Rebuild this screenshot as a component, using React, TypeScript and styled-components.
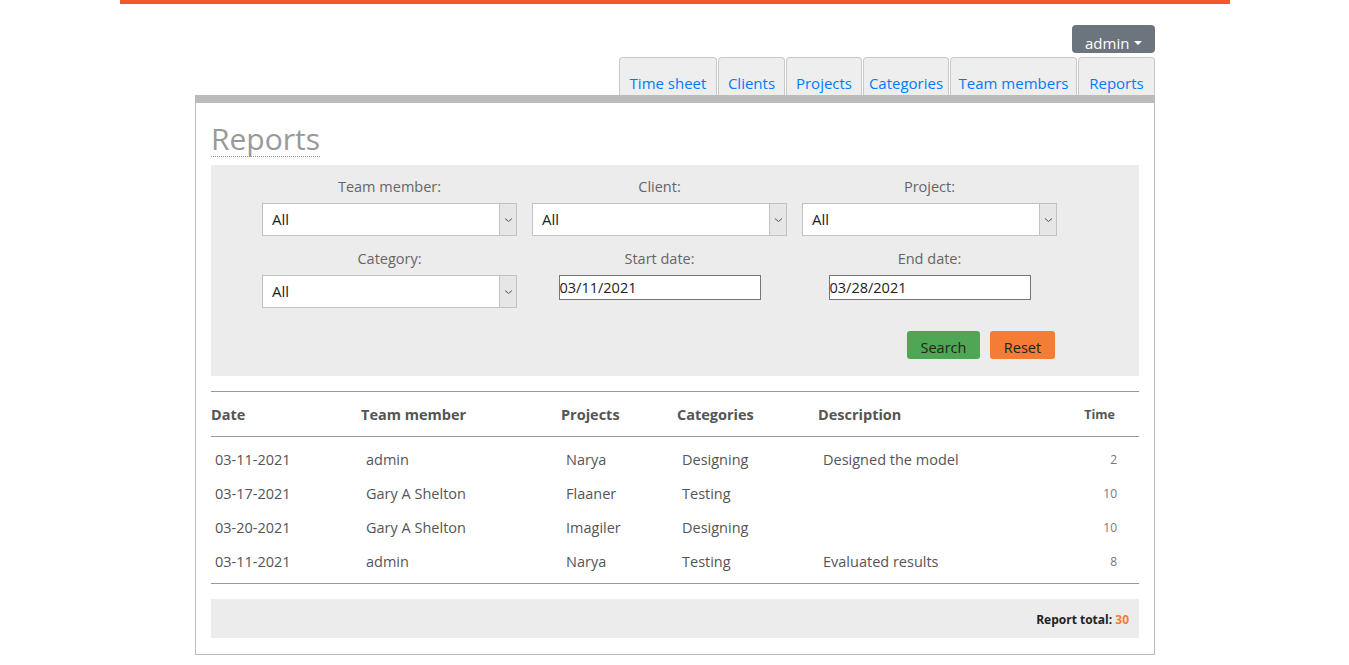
import React from 'react';
import styled, { createGlobalStyle } from 'styled-components';

const GlobalStyle = createGlobalStyle`
  body {
    margin: 0;
    background: #fff;
    font-family: "Open Sans", "Noto Sans", Arial, sans-serif;
    color: #555;
  }
`;

const TopBar = styled.div`
  width: 1110px;
  height: 4px;
  margin: 0 auto 0 120px;
  background: #f05a28;
`;

const Wrapper = styled.div`
  width: 960px;
  margin: 0 0 0 195px;
`;

const UserRow = styled.div`
  display: flex;
  justify-content: flex-end;
  padding-top: 21px;
`;

const UserButton = styled.button`
  display: flex;
  align-items: flex-end;
  gap: 5px;
  width: 83px;
  height: 28px;
  padding: 0 0 0 13px;
  border: none;
  border-radius: 4px;
  background: #6c757d;
  color: #fff;
  font-family: inherit;
  font-size: 15px;
  cursor: pointer;
`;

const Caret = styled.span`
  width: 0;
  height: 0;
  margin-bottom: 8px;
  border-left: 4px solid transparent;
  border-right: 4px solid transparent;
  border-top: 4px solid #fff;
`;

const Tabs = styled.nav`
  display: flex;
  justify-content: flex-end;
  margin-top: 4px;
`;

const Tab = styled.a<{ $w: number }>`
  display: block;
  box-sizing: border-box;
  width: ${(p) => p.$w}px;
  height: 38px;
  padding-top: 14px;
  margin-left: 1px;
  border: 1px solid #c8c8c8;
  border-bottom: none;
  border-radius: 4px 4px 0 0;
  background: #eee;
  color: #007bff;
  font-size: 15px;
  line-height: 22px;
  text-align: center;
  text-decoration: none;
  white-space: nowrap;
`;

const Panel = styled.main`
  box-sizing: border-box;
  border: 1px solid #bbb;
  border-top: 8px solid #bbb;
  padding: 19px 15px 16px;
`;

const Title = styled.h1`
  display: inline-block;
  margin: 0;
  font-size: 30px;
  font-weight: 400;
  line-height: 34px;
  color: #999;
  border-bottom: 1px dotted #888;
`;

const Filters = styled.section`
  margin-top: 8px;
  padding: 12px 82px 17px 51px;
  background: #ececec;
`;

const FilterGrid = styled.div`
  display: grid;
  grid-template-columns: repeat(3, 255px);
  column-gap: 15px;
  row-gap: 13px;
`;

const Field = styled.label`
  display: flex;
  flex-direction: column;
  align-items: center;
  gap: 7px;
  font-size: 14.5px;
  color: #666;
`;

const SelectBox = styled.div`
  display: flex;
  box-sizing: border-box;
  width: 255px;
  height: 33px;
  border: 1px solid #c2c2c2;
  background: #fff;
`;

const SelectValue = styled.span`
  flex: 1;
  padding-left: 9px;
  font-size: 15px;
  line-height: 31px;
  color: #222;
`;

const SelectArrow = styled.span`
  display: flex;
  align-items: center;
  justify-content: center;
  width: 16px;
  border-left: 1px solid #c2c2c2;
  background: #e6e6e6;
`;

const DateInput = styled.div`
  box-sizing: border-box;
  width: 202px;
  height: 25px;
  border: 1px solid #767676;
  background: #fff;
  font-size: 14.5px;
  line-height: 23px;
  color: #222;
`;

const Actions = styled.div`
  display: flex;
  justify-content: flex-end;
  gap: 10px;
  margin-top: 23px;
  padding-right: 2px;
`;

const Btn = styled.button<{ $bg: string; $w: number }>`
  width: ${(p) => p.$w}px;
  height: 28px;
  padding: 4px 0 0;
  border: none;
  border-radius: 3px;
  background: ${(p) => p.$bg};
  color: #222;
  font-family: inherit;
  font-size: 14.5px;
  cursor: pointer;
`;

const Table = styled.table`
  width: 100%;
  margin-top: 15px;
  border-collapse: collapse;
  border-top: 1px solid #999;
  border-bottom: 1px solid #999;
`;

const Th = styled.th<{ $w?: number; $small?: boolean }>`
  width: ${(p) => (p.$w ? `${p.$w}px` : 'auto')};
  height: 44px;
  padding: 0;
  text-align: ${(p) => (p.$small ? 'right' : 'left')};
  padding-right: ${(p) => (p.$small ? '24px' : '0')};
  font-size: ${(p) => (p.$small ? '12.5px' : '14.5px')};
  font-weight: 700;
  color: #555;
  border-bottom: 1px solid #999;
`;

const Td = styled.td<{ $small?: boolean; $first?: boolean }>`
  height: 34px;
  padding: 0 0 0 ${(p) => (p.$small ? '0' : p.$first ? '4px' : '5px')};
  text-align: ${(p) => (p.$small ? 'right' : 'left')};
  padding-right: ${(p) => (p.$small ? '22px' : '0')};
  font-size: ${(p) => (p.$small ? '12px' : '14.5px')};
  color: ${(p) => (p.$small ? '#777' : '#555')};
  vertical-align: middle;
`;

const Row = styled.tr`
  &:first-child td {
    padding-top: 5px;
  }
  &:last-child td {
    padding-bottom: 5px;
  }
`;

const TotalBar = styled.div`
  margin-top: 15px;
  padding: 12px 10px 0 0;
  height: 27px;
  box-sizing: content-box;
  background: #ececec;
  text-align: right;
  font-size: 12px;
  font-weight: 700;
  color: #222;
`;

const TotalValue = styled.span`
  color: #f57c35;
`;

const ChevronDown = () => (
  <svg width="9" height="6" viewBox="0 0 9 6">
    <path d="M1 1.5l3.5 3 3.5-3" fill="none" stroke="#555" strokeWidth="1" />
  </svg>
);

const Select = ({ value }: { value: string }) => (
  <SelectBox>
    <SelectValue>{value}</SelectValue>
    <SelectArrow>
      <ChevronDown />
    </SelectArrow>
  </SelectBox>
);

const tabs = [
  { label: 'Time sheet', w: 98 },
  { label: 'Clients', w: 67 },
  { label: 'Projects', w: 76 },
  { label: 'Categories', w: 86 },
  { label: 'Team members', w: 127 },
  { label: 'Reports', w: 77 },
];

const rows = [
  { date: '03-11-2021', member: 'admin', project: 'Narya', category: 'Designing', desc: 'Designed the model', time: 2 },
  { date: '03-17-2021', member: 'Gary A Shelton', project: 'Flaaner', category: 'Testing', desc: '', time: 10 },
  { date: '03-20-2021', member: 'Gary A Shelton', project: 'Imagiler', category: 'Designing', desc: '', time: 10 },
  { date: '03-11-2021', member: 'admin', project: 'Narya', category: 'Testing', desc: 'Evaluated results', time: 8 },
];

export default function App() {
  const total = rows.reduce((s, r) => s + r.time, 0);
  return (
    <>
      <GlobalStyle />
      <TopBar />
      <Wrapper>
        <UserRow>
          <UserButton>
            admin <Caret />
          </UserButton>
        </UserRow>
        <Tabs>
          {tabs.map((t) => (
            <Tab key={t.label} href="#" $w={t.w}>
              {t.label}
            </Tab>
          ))}
        </Tabs>
        <Panel>
          <Title>Reports</Title>
          <Filters>
            <FilterGrid>
              <Field>
                Team member:
                <Select value="All" />
              </Field>
              <Field>
                Client:
                <Select value="All" />
              </Field>
              <Field>
                Project:
                <Select value="All" />
              </Field>
              <Field>
                Category:
                <Select value="All" />
              </Field>
              <Field>
                Start date:
                <DateInput>03/11/2021</DateInput>
              </Field>
              <Field>
                End date:
                <DateInput>03/28/2021</DateInput>
              </Field>
            </FilterGrid>
            <Actions>
              <Btn $bg="#4fa655" $w={73}>Search</Btn>
              <Btn $bg="#f57c35" $w={65}>Reset</Btn>
            </Actions>
          </Filters>
          <Table>
            <thead>
              <tr>
                <Th $w={150}>Date</Th>
                <Th $w={200}>Team member</Th>
                <Th $w={116}>Projects</Th>
                <Th $w={141}>Categories</Th>
                <Th>Description</Th>
                <Th $small>Time</Th>
              </tr>
            </thead>
            <tbody>
              {rows.map((r, i) => (
                <Row key={i}>
                  <Td $first>{r.date}</Td>
                  <Td>{r.member}</Td>
                  <Td>{r.project}</Td>
                  <Td>{r.category}</Td>
                  <Td>{r.desc}</Td>
                  <Td $small>{r.time}</Td>
                </Row>
              ))}
            </tbody>
          </Table>
          <TotalBar>
            Report total: <TotalValue>{total}</TotalValue>
          </TotalBar>
        </Panel>
      </Wrapper>
    </>
  );
}
